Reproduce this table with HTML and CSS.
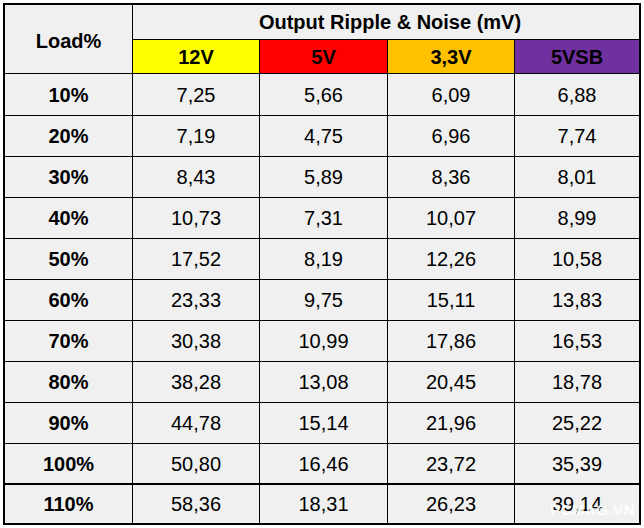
FILE: index.html
```html
<!DOCTYPE html>
<html>
<head>
<meta charset="utf-8">
<link rel="stylesheet" href="styles.css">
</head>
<body>
<div class="wrap">
  <div class="grid">
    <div class="cell head load">Load%</div>
    <div class="cell head title">Output Ripple &amp; Noise (mV)</div>
    <div class="cell head v12">12V</div>
    <div class="cell head v5">5V</div>
    <div class="cell head v33">3,3V</div>
    <div class="cell head vsb">5VSB</div>

    <div class="cell lbl">10%</div><div class="cell">7,25</div><div class="cell">5,66</div><div class="cell">6,09</div><div class="cell">6,88</div>
    <div class="cell lbl">20%</div><div class="cell">7,19</div><div class="cell">4,75</div><div class="cell">6,96</div><div class="cell">7,74</div>
    <div class="cell lbl">30%</div><div class="cell">8,43</div><div class="cell">5,89</div><div class="cell">8,36</div><div class="cell">8,01</div>
    <div class="cell lbl">40%</div><div class="cell">10,73</div><div class="cell">7,31</div><div class="cell">10,07</div><div class="cell">8,99</div>
    <div class="cell lbl">50%</div><div class="cell">17,52</div><div class="cell">8,19</div><div class="cell">12,26</div><div class="cell">10,58</div>
    <div class="cell lbl">60%</div><div class="cell">23,33</div><div class="cell">9,75</div><div class="cell">15,11</div><div class="cell">13,83</div>
    <div class="cell lbl">70%</div><div class="cell">30,38</div><div class="cell">10,99</div><div class="cell">17,86</div><div class="cell">16,53</div>
    <div class="cell lbl">80%</div><div class="cell">38,28</div><div class="cell">13,08</div><div class="cell">20,45</div><div class="cell">18,78</div>
    <div class="cell lbl">90%</div><div class="cell">44,78</div><div class="cell">15,14</div><div class="cell">21,96</div><div class="cell">25,22</div>
    <div class="cell lbl">100%</div><div class="cell">50,80</div><div class="cell">16,46</div><div class="cell">23,72</div><div class="cell">35,39</div>
    <div class="cell lbl last">110%</div><div class="cell last">58,36</div><div class="cell last">18,31</div><div class="cell last">26,23</div><div class="cell last">39,14</div>
  </div>
  <div class="watermark">PCMAG.VN</div>
</div>
</body>
</html>
```

FILE: styles.css
```css
html, body {
  margin: 0;
  padding: 0;
  background: #ffffff;
}

body {
  padding: 3px;
  font-family: "Liberation Sans", Arial, sans-serif;
}

.wrap {
  position: relative;
  width: 638px;
}

.grid {
  display: grid;
  grid-template-columns: 127px 126px 127px 126px 124px;
  grid-template-rows: 34px 33px 41px repeat(8, 40px) 39px 39px;
  gap: 1px;
  background: #000000;
  border: 2px solid #000000;
}

.cell {
  background: #f0f0f0;
  display: flex;
  align-items: center;
  justify-content: center;
  font-size: 20px;
  color: #000000;
  padding-top: 1px;
  box-sizing: border-box;
}

.head,
.lbl {
  font-weight: bold;
}

.load {
  grid-row: 1 / 3;
  grid-column: 1;
  padding-top: 4px;
}

.title {
  grid-column: 2 / 6;
  padding-left: 8px;
}

.v12 { background: #ffff00; }
.v5 { background: #ff0000; }
.v33 { background: #ffc000; }
.vsb { background: #7030a0; }

.last {
  border-top: 1px solid #000000;
}

.watermark {
  position: absolute;
  right: 6px;
  bottom: 7px;
  font-size: 15px;
  font-weight: bold;
  color: rgba(255, 255, 255, 0.9);
  letter-spacing: 0.5px;
}
```
